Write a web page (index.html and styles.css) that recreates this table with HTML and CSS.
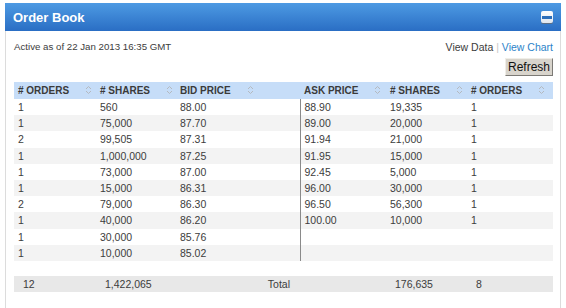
FILE: index.html
```html
<!DOCTYPE html>
<html>
<head>
<meta charset="utf-8">
<link rel="stylesheet" href="styles.css">
</head>
<body>
<div class="panel">
  <div class="panel-head">
    <span class="title">Order Book</span>
    <span class="collapse"><span class="bar"></span></span>
  </div>
  <div class="panel-body">
    <div class="topline">
      <span class="asof">Active as of 22 Jan 2013 16:35 GMT</span>
      <span class="views">View Data <span class="sep">|</span> <a class="link">View Chart</a></span>
    </div>
    <div class="btnrow"><button class="refresh">Refresh</button></div>
    <table class="book">
      <colgroup>
        <col class="c1"><col class="c2"><col class="c3"><col class="c4"><col class="c5"><col class="c6">
      </colgroup>
      <thead>
        <tr>
          <th># ORDERS<svg class="sort" viewBox="0 0 7 10"><path d="M1 4 L3.5 1.5 L6 4 M1 6 L3.5 8.5 L6 6" fill="none" stroke="#b4b9bf" stroke-width="1"/></svg></th>
          <th># SHARES<svg class="sort" viewBox="0 0 7 10"><path d="M1 4 L3.5 1.5 L6 4 M1 6 L3.5 8.5 L6 6" fill="none" stroke="#b4b9bf" stroke-width="1"/></svg></th>
          <th>BID PRICE<svg class="sort" viewBox="0 0 7 10"><path d="M1 4 L3.5 1.5 L6 4 M1 6 L3.5 8.5 L6 6" fill="none" stroke="#b4b9bf" stroke-width="1"/></svg></th>
          <th>ASK PRICE<svg class="sort" viewBox="0 0 7 10"><path d="M1 4 L3.5 1.5 L6 4 M1 6 L3.5 8.5 L6 6" fill="none" stroke="#b4b9bf" stroke-width="1"/></svg></th>
          <th># SHARES<svg class="sort" viewBox="0 0 7 10"><path d="M1 4 L3.5 1.5 L6 4 M1 6 L3.5 8.5 L6 6" fill="none" stroke="#b4b9bf" stroke-width="1"/></svg></th>
          <th># ORDERS<svg class="sort" viewBox="0 0 7 10"><path d="M1 4 L3.5 1.5 L6 4 M1 6 L3.5 8.5 L6 6" fill="none" stroke="#b4b9bf" stroke-width="1"/></svg></th>
        </tr>
      </thead>
      <tbody>
        <tr><td>1</td><td>560</td><td>88.00</td><td class="ask">88.90</td><td>19,335</td><td>1</td></tr>
        <tr><td>1</td><td>75,000</td><td>87.70</td><td class="ask">89.00</td><td>20,000</td><td>1</td></tr>
        <tr><td>2</td><td>99,505</td><td>87.31</td><td class="ask">91.94</td><td>21,000</td><td>1</td></tr>
        <tr><td>1</td><td>1,000,000</td><td>87.25</td><td class="ask">91.95</td><td>15,000</td><td>1</td></tr>
        <tr><td>1</td><td>73,000</td><td>87.00</td><td class="ask">92.45</td><td>5,000</td><td>1</td></tr>
        <tr><td>1</td><td>15,000</td><td>86.31</td><td class="ask">96.00</td><td>30,000</td><td>1</td></tr>
        <tr><td>2</td><td>79,000</td><td>86.30</td><td class="ask">96.50</td><td>56,300</td><td>1</td></tr>
        <tr><td>1</td><td>40,000</td><td>86.20</td><td class="ask">100.00</td><td>10,000</td><td>1</td></tr>
        <tr><td>1</td><td>30,000</td><td>85.76</td><td class="ask"></td><td></td><td></td></tr>
        <tr><td>1</td><td>10,000</td><td>85.02</td><td class="ask"></td><td></td><td></td></tr>
      </tbody>
    </table>
    <table class="totals">
      <colgroup>
        <col class="c1"><col class="c2"><col class="c3"><col class="c4"><col class="c5"><col class="c6">
      </colgroup>
      <tr><td>12</td><td>1,422,065</td><td class="total">Total</td><td></td><td>176,635</td><td>8</td></tr>
    </table>
  </div>
</div>
</body>
</html>
```

FILE: styles.css
```css
html, body {
  margin: 0;
  padding: 0;
  background: #fff;
}
body {
  font-family: "Liberation Sans", Arial, sans-serif;
  color: #3c3c3c;
}
.panel {
  width: 556px;
  margin: 3px 0 0 5px;
}
.panel-head {
  height: 28px;
  background: linear-gradient(#4d9ae3, #2a6ec4);
  display: flex;
  align-items: center;
  justify-content: space-between;
  padding: 0 8px 0 8px;
}
.title {
  color: #fff;
  font-weight: bold;
  font-size: 13px;
}
.collapse {
  width: 12px;
  height: 12px;
  background: linear-gradient(#ffffff, #dfe6ee);
  border-radius: 2px;
  box-shadow: 0 1px 0 #5c6f86;
  display: flex;
  align-items: center;
  justify-content: center;
}
.collapse .bar {
  width: 10px;
  height: 3px;
  background: #2d6fba;
}
.panel-body {
  border-left: 1px solid #dcdcdc;
  border-right: 1px solid #dcdcdc;
  padding: 10px 7px 16px 8px;
  box-sizing: border-box;
  height: 277px;
}
.topline {
  display: flex;
  justify-content: space-between;
  font-size: 9.7px;
  line-height: 12px;
}
.views {
  font-size: 10.5px;
}
.sep {
  color: #c8c8c8;
}
.link {
  color: #2c83c9;
}
.btnrow {
  display: flex;
  justify-content: flex-end;
  margin-top: 5px;
}
.refresh {
  font-family: "Liberation Sans", Arial, sans-serif;
  font-size: 12px;
  height: 18px;
  padding: 0 2px;
  background: #d8d4cc;
  border: 1px solid;
  border-color: #f0eee8 #7c7a76 #7c7a76 #f0eee8;
  color: #111;
  line-height: 14px;
}
table {
  width: 539px;
  border-collapse: collapse;
  table-layout: fixed;
  font-size: 10.5px;
}
.book {
  margin-top: 6px;
}
col.c1 { width: 82px; }
col.c2 { width: 80px; }
col.c3 { width: 124px; }
col.c4 { width: 86px; }
col.c5 { width: 81px; }
col.c6 { width: 86px; }
th {
  background: #c6ddf8;
  text-align: left;
  font-size: 10px;
  font-weight: bold;
  color: #3a3a3a;
  height: 17px;
  padding: 0 0 0 4px;
  white-space: nowrap;
}
th .sort {
  width: 7px;
  height: 10px;
  margin-left: 16px;
  vertical-align: -1px;
}
td {
  height: 16.2px;
  padding: 0 0 0 4px;
  line-height: 16px;
  white-space: nowrap;
}
.book tbody tr:nth-child(even) td {
  background: #f3f3f3;
}
td.ask {
  border-left: 1px solid #8a8a8a;
  padding-left: 4px;
}
.totals {
  margin-top: 15px;
}
.totals td {
  background: #e8e8e8;
  padding-left: 9px;
}
.totals td.total {
  text-align: right;
  padding-right: 10px;
}
```
